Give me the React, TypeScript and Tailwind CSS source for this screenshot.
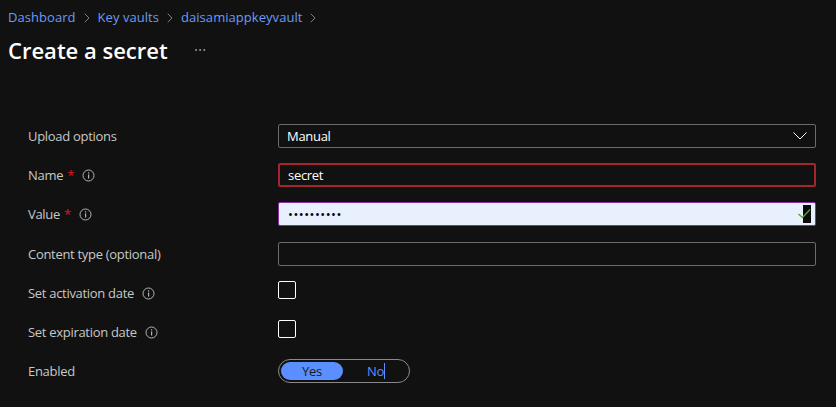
import React from 'react';
import { ChevronRight, MoreHorizontal } from 'lucide-react';

function InfoIcon({ className = '' }: { className?: string }) {
  return (
    <svg width="13" height="13" viewBox="0 0 13 13" fill="none" className={className}>
      <circle cx="6.5" cy="6.5" r="5.5" stroke="#b5b5b5" strokeWidth="1" />
      <rect x="6" y="5.5" width="1.2" height="4" fill="#b5b5b5" />
      <rect x="6" y="3.3" width="1.2" height="1.2" fill="#b5b5b5" />
    </svg>
  );
}

function Row({ label, required, info, children }: {
  label: string;
  required?: boolean;
  info?: boolean;
  children: React.ReactNode;
}) {
  return (
    <div className="flex h-[24px] mb-[15px]">
      <div className="w-[250px] shrink-0 flex items-center pt-[1px] text-[13px] tracking-[-0.3px] text-[#c8c8c8]">
        <span>{label}</span>
        {required && <span className="text-[#e81123] ml-[4px]">*</span>}
        {info && <InfoIcon className="ml-[8px]" />}
      </div>
      <div className="w-[538px] shrink-0">{children}</div>
    </div>
  );
}

function Crumb({ label }: { label: string }) {
  return (
    <>
      <span className="text-[#6a9bf7]">{label}</span>
      <ChevronRight className="w-[16px] h-[16px] mx-[3px] text-[#9a9a9a]" strokeWidth={1.2} />
    </>
  );
}

export default function App() {
  return (
    <div className="w-[836px] h-[407px] bg-[#111111] overflow-hidden font-['Open_Sans','Noto_Sans',sans-serif]">
      <div className="flex items-center h-[18px] mt-[9px] ml-[8px] text-[13px] tracking-[0.05px]">
        <Crumb label="Dashboard" />
        <Crumb label="Key vaults" />
        <Crumb label="daisamiappkeyvault" />
      </div>
      <div className="flex items-center h-[32px] mt-[7px] ml-[8px]">
        <h1 className="text-[22px] font-semibold text-white">Create a secret</h1>
        <MoreHorizontal className="w-[14px] h-[14px] ml-[25px] text-[#b5b5b5]" strokeWidth={1.2} />
      </div>

      <div className="mt-[58px] px-[28px]">
        <Row label="Upload options">
          <div className="h-full border border-[#6b6b6b] rounded-[2px] flex items-center justify-between pl-[8px] pr-[8px] text-[13px] tracking-[-0.3px] text-white">
            <span className="pt-[1px]">Manual</span>
            <svg width="14" height="8" viewBox="0 0 14 8" fill="none">
              <path d="M0.5 0.5 L7 7 L13.5 0.5" stroke="#ffffff" strokeWidth="1" />
            </svg>
          </div>
        </Row>
        <Row label="Name" required info>
          <div className="h-full border-2 border-[#a4262c] rounded-[2px] flex items-center pl-[8px] pt-[1px] text-[13px] tracking-[-0.3px] text-white">
            secret
          </div>
        </Row>
        <Row label="Value" required info>
          <div className="h-full border border-[#8f2da8] rounded-[2px] bg-[#e8f0fe] flex items-center justify-between pl-[9px] pr-[4px]">
            <span className="text-[13px] text-black tracking-[0.5px] leading-none">••••••••••</span>
            <div className="relative w-[8px] h-[18px] bg-[#0b0b0b]">
              <svg width="13" height="10" viewBox="0 0 13 10" fill="none" className="absolute left-[-5px] top-[4px]">
                <path d="M0.5 5 L4.5 8.5 L12 0.5" stroke="#5ea32f" strokeWidth="1.3" />
              </svg>
            </div>
          </div>
        </Row>
        <div className="mt-[16px]">
          <Row label="Content type (optional)">
            <div className="h-full border border-[#6b6b6b] rounded-[2px]" />
          </Row>
        </div>
        <Row label="Set activation date" info>
          <div className="w-[18px] h-[18px] border border-white rounded-[2px]" />
        </Row>
        <Row label="Set expiration date" info>
          <div className="w-[18px] h-[18px] border border-white rounded-[2px]" />
        </Row>
        <Row label="Enabled">
          <div className="w-[132px] h-full border border-[#8a8a8a] rounded-full flex items-center pl-[2px] text-[13px] tracking-[-0.3px]">
            <div className="w-[62px] h-[18px] rounded-full bg-[#5b8fff] flex items-center justify-center pt-[1px] text-[#1b1b1b]">Yes</div>
            <div className="w-[66px] flex items-center justify-center text-[#5b8fff]">
              <span className="border-r border-[#5b8fff] leading-[16px]">No</span>
            </div>
          </div>
        </Row>
      </div>
    </div>
  );
}
